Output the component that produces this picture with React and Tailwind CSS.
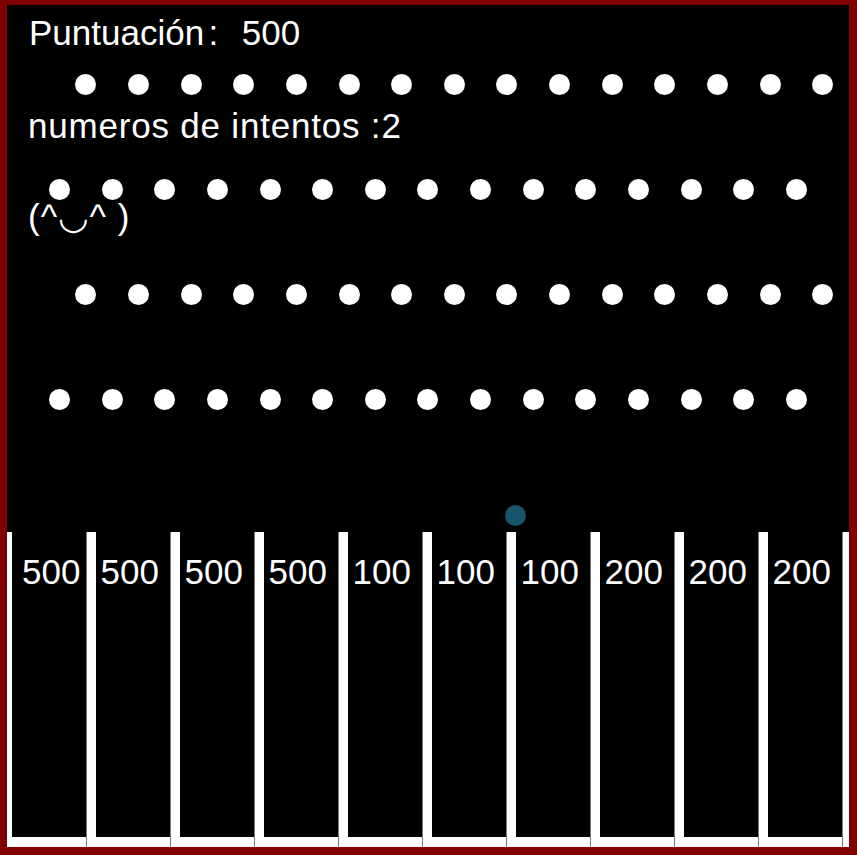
import React from "react";

const ROWS = [
  { y: 79, offset: 78.9 },
  { y: 184, offset: 52.6 },
  { y: 289, offset: 78.9 },
  { y: 394, offset: 52.6 },
];
const SPACING = 52.625;
const LABELS = [500, 500, 500, 500, 100, 100, 100, 200, 200, 200];

function Bar() {
  return <div className="w-[10px] h-full shrink-0 border-l border-[#7a7a7a] bg-white" />;
}

export default function App() {
  const pegs = [];
  ROWS.forEach((r, ri) => {
    for (let i = 0; i < 15; i++) {
      pegs.push({ key: `${ri}-${i}`, x: r.offset + SPACING * i, y: r.y });
    }
  });

  return (
    <div className="w-[857px] h-[855px] bg-[#800000] pl-[7px] pt-[5px] font-['Liberation_Sans','DejaVu_Sans',sans-serif]">
      <div className="relative w-[842px] h-[842px] bg-black overflow-hidden flex flex-col">
        <div className="relative h-[527px] shrink-0 pl-[21px] text-white text-[35px] leading-[35px]">
          <p className="pt-[10px] pl-[1px] whitespace-pre">
            <span>Puntuación</span>
            <span className="ml-[4.4px]">:</span>
            <span className="ml-[23.6px]">500</span>
          </p>
          <p className="mt-[58px] whitespace-pre tracking-[0.8px]">numeros de intentos :2</p>
          <p className="mt-[56px] whitespace-pre tracking-[1px]">(^◡^ )</p>
          {pegs.map((p) => (
            <div
              key={p.key}
              className="absolute w-[21px] h-[21px] rounded-full bg-white"
              style={{ left: p.x - 10.5, top: p.y - 10.5 }}
            />
          ))}
          <div className="absolute left-[498px] top-[500px] w-[21px] h-[21px] rounded-full bg-[#17566a]" />
        </div>
        <div className="flex h-[315px] -ml-[5px] shrink-0">
          {LABELS.map((l, i) => (
            <React.Fragment key={i}>
              <Bar />
              <div
                className={`w-[74px] h-full shrink-0 bg-black border-b-[10px] border-white text-white text-[35px] leading-[35px] pt-[22px] ${
                  i === 0 ? "pl-[10px]" : "pl-[4.5px]"
                }`}
              >
                {l}
              </div>
            </React.Fragment>
          ))}
          <Bar />
        </div>
      </div>
    </div>
  );
}
